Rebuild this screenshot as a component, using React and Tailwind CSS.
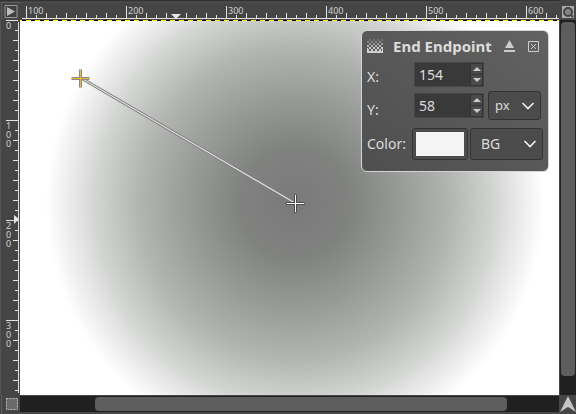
import React from "react";

const hTicks = Array.from({ length: 54 }, (_, i) => i);
const vTicks = Array.from({ length: 38 }, (_, i) => i);

function TopRuler() {
  return (
    <svg className="block h-5 w-full" role="img" aria-label="Horizontal ruler">
      <path d="M2 18.5H539" stroke="#e2e2e2" />
      {hTicks.map((i) => {
        const x = 6.5 + i * 10;
        const top = i % 10 === 0 ? 6 : i % 2 === 0 ? 13 : 15;
        return x < 539 ? <path key={i} d={`M${x} ${top}V18`} stroke="#e2e2e2" /> : null;
      })}
      {[100, 200, 300, 400, 500, 600].map((n, i) => (
        <text key={n} x={8 + i * 100} y="14" fill="#d2d2d2" className="font-['Noto_Sans',sans-serif] text-[9px]">{n}</text>
      ))}
      <path d="M151 14h10l-5 5z" fill="#e6e6e6" />
    </svg>
  );
}

function LeftRuler() {
  return (
    <svg className="block h-full w-5" role="img" aria-label="Vertical ruler">
      <path d="M18.5 2V373" stroke="#e2e2e2" />
      {vTicks.map((i) => {
        const y = 0.5 + i * 10;
        const left = i % 10 === 0 ? 6 : i % 2 === 0 ? 13 : 15;
        return <path key={i} d={`M${left} ${y}H18`} stroke="#e2e2e2" />;
      })}
      {["0", "100", "200", "300"].map((n, i) => {
        const y = 9 + i * 100;
        return (
          <text key={n} x="6 6 6" y={`${y} ${y + 9} ${y + 18}`} fill="#d2d2d2" className="font-['Noto_Sans',sans-serif] text-[9px]">{n}</text>
        );
      })}
      <path d="M14 195v9l5-5z" fill="#e6e6e6" />
    </svg>
  );
}

function Chevron() {
  return (
    <svg className="pointer-events-none absolute right-[5px] h-2 w-[14px]" viewBox="0 0 14 8">
      <path d="M1.5 1L7 6.5L12.5 1" fill="none" stroke="#f2f2f2" strokeWidth="1.6" />
    </svg>
  );
}

function Spin({ id, value }) {
  return (
    <div className="flex h-[25px] w-[70px] border border-[#464646] bg-[#393939]">
      <input id={id} defaultValue={value} className="w-0 min-w-0 grow bg-transparent pl-1 text-sm text-[#dddddd] outline-none" />
      <div className="flex w-[13px] flex-col divide-y divide-[#333333] border border-[#333333] bg-[#4a4a4a]">
        <button aria-label="Increase" className="flex grow items-center justify-center">
          <svg className="h-1 w-2" viewBox="0 0 8 4"><path d="M0 4L4 0L8 4z" fill="#cccccc" /></svg>
        </button>
        <button aria-label="Decrease" className="flex grow items-center justify-center">
          <svg className="h-1 w-2" viewBox="0 0 8 4"><path d="M0 0H8L4 4z" fill="#cccccc" /></svg>
        </button>
      </div>
    </div>
  );
}

function GradientIcon() {
  const rows = [0, 1, 2, 3, 4, 5];
  const fills = ["#707070", "#858585", "#9b9b9b", "#b5b5b5", "#cfcfcf", "#cfcfcf"];
  return (
    <svg className="h-[14px] w-4" viewBox="0 0 16 14" shapeRendering="crispEdges">
      {rows.map((r) =>
        [0, 1, 2, 3].map((c) => (
          <rect key={`${r}-${c}`} x={c * 4 + (r % 2 ? 0 : 2)} y={r * 2} width="2" height="2" fill={fills[r]} />
        ))
      )}
      <path d="M0 12h16v2H0zM0 9h1v3H0zM15 9h1v3h-1zM4 10h2v2H4zM12 10h2v2h-2z" fill="#cfcfcf" />
    </svg>
  );
}

function EndpointDialog() {
  return (
    <section className="absolute right-[10px] top-[10px] h-[142px] w-[188px] rounded-md border border-[#d4d4d4] bg-gradient-to-tr from-[#4f4f4f] to-[#626262] px-[5px] pt-[5px] text-[#dcdcdc]">
      <header className="flex h-5 items-center">
        <GradientIcon />
        <h1 className="grow pl-[10px] text-[15px] leading-5 font-bold">End Endpoint</h1>
        <button aria-label="Detach" className="mr-[13px]">
          <svg className="block h-3 w-[11px]" viewBox="0 0 11 12"><path d="M5.5 0L10 8H1zM0 10h11v2H0z" fill="#cccccc" /></svg>
        </button>
        <button aria-label="Close" className="mr-1">
          <svg className="block h-[11px] w-[11px]" viewBox="0 0 11 11"><path d="M.5.5h10v10H.5zM3 3l5 5M8 3L3 8" fill="none" stroke="#cccccc" /></svg>
        </button>
      </header>
      <div className="mt-[6px] flex h-[25px] items-center">
        <label htmlFor="ex" className="w-[47px] pt-1 text-sm">X:</label>
        <Spin id="ex" value="154" />
      </div>
      <div className="mt-1 flex h-[29px] items-center">
        <label htmlFor="ey" className="w-[47px] pt-2 text-sm">Y:</label>
        <Spin id="ey" value="58" />
        <div className="relative ml-1 flex h-[29px] w-[53px] items-center rounded-[3px] border border-[#333333] bg-[#4b4b4b]">
          <select aria-label="Unit" className="h-full w-full appearance-none bg-transparent pl-[6px] text-[13px] outline-none"><option>px</option></select>
          <Chevron />
        </div>
      </div>
      <div className="mt-2 flex h-8 items-center">
        <label htmlFor="swatch" className="w-[45px] text-sm">Color:</label>
        <button id="swatch" aria-label="Endpoint color" className="h-8 w-14 rounded-[3px] border border-[#333333] bg-[#4b4b4b] p-[3px]">
          <span className="block h-full bg-[#f5f5f5]" />
        </button>
        <div className="relative ml-[2px] flex h-8 w-[73px] shrink-0 items-center rounded-[3px] border border-[#333333] bg-[#4b4b4b]">
          <select aria-label="Color source" className="h-full w-full appearance-none bg-transparent pl-[10px] text-sm outline-none"><option>BG</option></select>
          <Chevron />
        </div>
      </div>
    </section>
  );
}

export default function App() {
  return (
    <main className="grid h-screen grid-cols-[20px_minmax(0,1fr)_17px] grid-rows-[20px_minmax(0,1fr)_19px] overflow-hidden bg-[#454545] font-['Noto_Sans',sans-serif]">
      <button aria-label="Image menu" className="block">
        <svg className="block h-5 w-5" viewBox="0 0 20 20">
          <path d="M1.5 2V20M2 2.5H20" stroke="#5c5c5c" />
          <path d="M0 0H20V1H0z" fill="#333333" />
          <path d="M5 5.5h12v12H5z" fill="#404040" stroke="#999999" />
          <path d="M7 7v9l8-4.5z" fill="#bdbdbd" />
        </svg>
      </button>
      <div className="bg-[linear-gradient(#333333_1px,#454545_1px,#454545_2px,#545454_2px,#454545_3px)]"><TopRuler /></div>
      <button aria-label="Zoom with window">
        <svg className="block h-5 w-[17px]" viewBox="0 0 17 20">
          <path d="M3 6h12v12H3z" fill="#aaaaaa" />
          <circle cx="9" cy="12" r="4" fill="#858585" stroke="#444444" strokeWidth="2" />
          <path d="M12 15l2 2" stroke="#444444" strokeWidth="2" />
        </svg>
      </button>

      <div className="border-l border-[#555555]"><div className="-ml-px h-full"><LeftRuler /></div></div>
      <div className="relative overflow-hidden bg-[radial-gradient(circle_249px_at_275px_183px,#7a7979,#808280_22%,#989a98_42%,#b2b4b1_62%,#d2d5d2_80%,#e6e6e6_88%,#ffffff)]">
        <svg className="absolute inset-0 h-full w-full" role="img" aria-label="Radial gradient from 154, 58">
          <path d="M0 .5H539" stroke="#000000" />
          <path d="M0 .5H539" stroke="#ffff00" strokeDasharray="5 4" strokeDashoffset="3" />
          <path d="M61 58L275 183" stroke="#7c7c7c" strokeWidth="3" />
          <path d="M61 58L275 183" stroke="#dddddd" strokeWidth="1.2" />
          <path d="M51.5 58.5h18M60.5 49.5v18" stroke="#8b8b8b" strokeWidth="3" />
          <path d="M52 58.5h17M60.5 50v17" stroke="#f0b82e" />
          <path d="M266.5 183.5h18M275.5 174.5v18" stroke="#4b4b4b" strokeWidth="3" />
          <path d="M267 183.5h17M275.5 175v17" stroke="#ffffff" />
        </svg>
        <EndpointDialog />
      </div>
      <div className="border-l border-[#454545] bg-[#202020] pt-[2px] pr-px">
        <div className="ml-px h-[354px] w-[14px] rounded-sm bg-[#5d5d5d]" />
      </div>

      <button aria-label="Quick mask">
        <svg className="block h-[19px] w-5" viewBox="0 0 20 19">
          <path d="M1.5 0V19" stroke="#5c5c5c" />
          <path d="M6.5 3.5h11v11h-11z" fill="#696969" stroke="#bbbbbb" strokeDasharray="2 1" />
        </svg>
      </button>
      <div className="border-t border-b-2 border-[#484848] bg-[#202020] pt-px">
        <div className="ml-[75px] h-[14px] w-[412px] rounded-sm bg-[#5d5d5d]" />
      </div>
      <button aria-label="Navigate image">
        <svg className="block h-[19px] w-[17px]" viewBox="0 0 17 19"><path d="M9 1L17 17L9 12L1 17z" fill="#c4c4c4" /></svg>
      </button>
    </main>
  );
}
